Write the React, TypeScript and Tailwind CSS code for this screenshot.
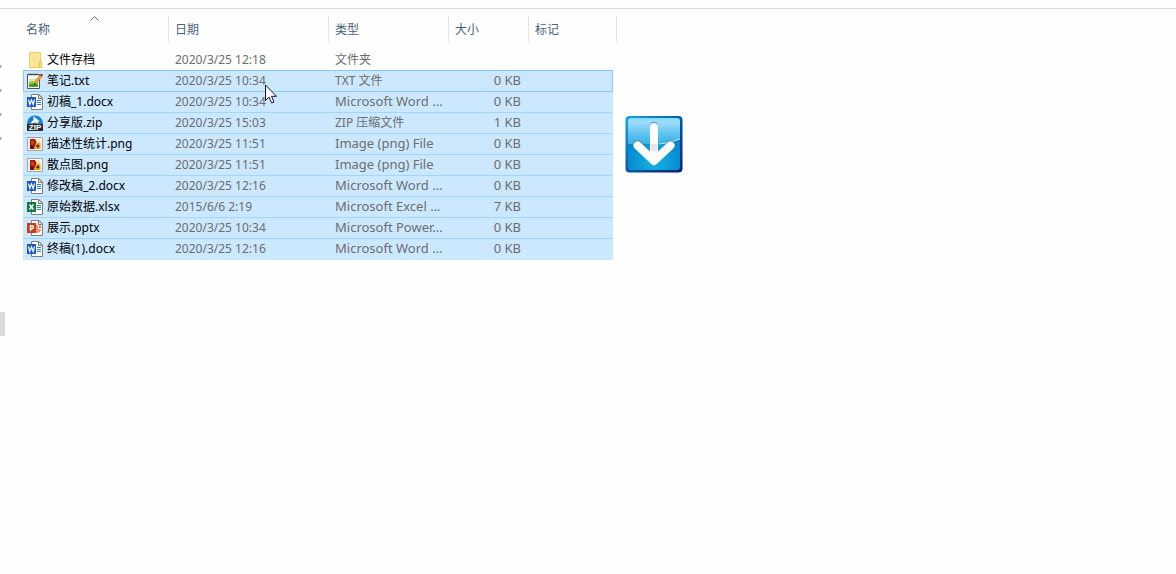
import type { ReactNode } from "react";

type Kind = "folder" | "text" | "word" | "zip" | "image" | "excel" | "slides";

interface Entry {
  name: string;
  date: string;
  type: string;
  size: string;
  kind: Kind;
}

const entries: Entry[] = [
  { name: "文件存档", date: "2020/3/25 12:18", type: "文件夹", size: "", kind: "folder" },
  { name: "笔记.txt", date: "2020/3/25 10:34", type: "TXT 文件", size: "0 KB", kind: "text" },
  { name: "初稿_1.docx", date: "2020/3/25 10:34", type: "Microsoft Word ...", size: "0 KB", kind: "word" },
  { name: "分享版.zip", date: "2020/3/25 15:03", type: "ZIP 压缩文件", size: "1 KB", kind: "zip" },
  { name: "描述性统计.png", date: "2020/3/25 11:51", type: "Image (png) File", size: "0 KB", kind: "image" },
  { name: "散点图.png", date: "2020/3/25 11:51", type: "Image (png) File", size: "0 KB", kind: "image" },
  { name: "修改稿_2.docx", date: "2020/3/25 12:16", type: "Microsoft Word ...", size: "0 KB", kind: "word" },
  { name: "原始数据.xlsx", date: "2015/6/6 2:19", type: "Microsoft Excel ...", size: "7 KB", kind: "excel" },
  { name: "展示.pptx", date: "2020/3/25 10:34", type: "Microsoft Power...", size: "0 KB", kind: "slides" },
  { name: "终稿(1).docx", date: "2020/3/25 12:16", type: "Microsoft Word ...", size: "0 KB", kind: "word" },
];

const isLatin = (value: string) => /^[\x20-\x7e]+$/.test(value);

function OfficeIcon({ color, letter, children }: { color: string; letter: ReactNode; children: ReactNode }) {
  return (
    <>
      <path d="M4.5 .5H12L15.5 4V15.5H4.5z" fill="#fff" stroke="#7d7d7d" />
      <path d="M11.5 .5V4.5H15.5z" fill="#e8e8e8" stroke="#7d7d7d" />
      {children}
      <path d="M0 3H9V13H0z" fill={color} />
      {letter}
    </>
  );
}

function FileIcon({ kind }: { kind: Kind }) {
  let art: ReactNode = null;
  if (kind === "folder") {
    art = (
      <>
        <path d="M2.5 .5H13.5V10H14.5V15.5H2.5z" fill="#fde693" stroke="#ecce68" />
        <path d="M12.5 9.5H14.5V15.5H12.5z" fill="#fbe28a" stroke="#e6c254" />
      </>
    );
  } else if (kind === "text") {
    art = (
      <>
        <path d="M.5 1.5H12.5V15.5H.5z" fill="#fff" stroke="#555" />
        <path d="M2 6l9-1v5H2z" fill="#cfe8b0" />
        <path d="M2 9l3-1 3 1 3-2v7H2z" fill="#8dd03f" />
        <path d="M2 11.5l4-1 5 1V14H2z" fill="#3fa51d" />
        <path d="M1.5 1.5H11.5" stroke="#444" strokeWidth="2" strokeDasharray="1 1" />
        <path d="M7.3 11.5L8 8.5 13 2l2 1.4L9.8 10z" fill="#f6a51d" stroke="#9b5b12" strokeWidth=".5" />
        <path d="M13 2L14 .5l2 1.3L15 3.4z" fill="#a3262b" />
        <path d="M6.8 12.3l.6-2 1.4 1z" fill="#222" />
      </>
    );
  } else if (kind === "word") {
    art = (
      <OfficeIcon color="#185abd" letter={<path d="M1.5 5.5L2.8 10.5 4.5 6 6.2 10.5 7.5 5.5" fill="none" stroke="#fff" strokeWidth="1.2" />}>
        <path d="M10 6.5H14M10 8.5H14M10 10.5H14" stroke="#2b7cd3" />
      </OfficeIcon>
    );
  } else if (kind === "excel") {
    art = (
      <OfficeIcon color="#107c41" letter={<path d="M2.5 5.5L6.5 10.5M6.5 5.5L2.5 10.5" stroke="#fff" strokeWidth="1.6" />}>
        <path d="M10 6.5H14M10 8.5H14M10 10.5H14" stroke="#21a366" />
      </OfficeIcon>
    );
  } else if (kind === "slides") {
    art = (
      <OfficeIcon color="#c43e1c" letter={<path d="M3.5 11V5.7H5a1.5 1.5 0 010 3H3.5" fill="none" stroke="#fff" strokeWidth="1.4" />}>
        <path d="M9 5V12.5a3.5 3.5 0 005-3.5H11V5z" fill="#ff8f6b" />
        <path d="M12 5V8H14.5A3 3 0 0012 5z" fill="#ed6c47" />
      </OfficeIcon>
    );
  } else if (kind === "zip") {
    art = (
      <>
        <path d="M0 8.5a8 8 0 0116 0z" fill="#0f80d8" />
        <path d="M6.5 1.2L13 6.5 10.5 6.3 12 8.5H9.5L8 7 6 8.5H3L6.5 5z" fill="#fff" />
        <path d="M0 8.5H16V16H0z" fill="#292d32" />
        <text x="8" y="15" textAnchor="middle" fill="#fff" fontFamily="Liberation Sans, sans-serif" fontSize="8" fontWeight="700">
          ZIP
        </text>
      </>
    );
  } else {
    art = (
      <>
        <path d="M.5 1.5H15.5V14.5H.5z" fill="#fafafa" stroke="#a2a2a2" />
        <path d="M2.5 3.5H13.5V12.5H2.5z" fill="#eee1b4" />
        <path d="M3 3H8l1.5 3-1 4-3 3H3z" fill="#a71912" />
        <path d="M4 4.5l3 .5 1 2-2 2-2-1z" fill="#d93515" />
        <path d="M3 9l3 1 2 3H3z" fill="#641313" />
        <path d="M8.5 8.5l2.5-2 2.5 1V13H7.5z" fill="#eea410" />
        <circle cx="10.8" cy="10" r="1.5" fill="#4d260d" />
        <path d="M7 5H9V8H7z" fill="#76310f" />
      </>
    );
  }
  return (
    <svg className="size-4 shrink-0" viewBox="0 0 16 16" aria-hidden="true">
      {art}
    </svg>
  );
}

function DownloadBadge() {
  return (
    <svg className="size-[58px]" viewBox="0 0 58 58" aria-hidden="true">
      <defs>
        <linearGradient id="edge" x1="0" y1="0" x2="1" y2="1">
          <stop offset="0" stopColor="#12a5e8" />
          <stop offset=".5" stopColor="#0759a8" />
          <stop offset="1" stopColor="#031f70" />
        </linearGradient>
        <linearGradient id="gloss" x1="0" y1="0" x2="0" y2="1">
          <stop offset="0" stopColor="#7fdcfc" />
          <stop offset=".15" stopColor="#a0dcfa" />
          <stop offset=".6" stopColor="#62c4f0" />
          <stop offset="1" stopColor="#35b0e6" />
        </linearGradient>
        <radialGradient id="base" cx=".5" cy=".85" r=".6">
          <stop offset="0" stopColor="#16b2e4" />
          <stop offset="1" stopColor="#0484cb" />
        </radialGradient>
      </defs>
      <rect x=".5" y="1" width="57" height="56.5" rx="4" fill="url(#edge)" />
      <rect x="3" y="3" width="52" height="52" rx="3" fill="url(#base)" />
      <path d="M3 6a3 3 0 013-3H52a3 3 0 013 3V24Q42 29 30 29H3z" fill="url(#gloss)" />
      <path d="M34 29Q44 28.5 55 24" fill="none" stroke="#c4ebfa" />
      <path d="M29 11V40M12.5 29.5L29 45 45.5 29.5" fill="none" stroke="#5c8fa8" strokeWidth="8" strokeLinecap="round" strokeLinejoin="round" />
      <path d="M29 12V40M12.5 30.5L29 46 45.5 30.5" fill="none" stroke="#fff" strokeWidth="8" strokeLinecap="round" strokeLinejoin="round" />
      <path d="M26 29H32V35L29 37 26 35z" fill="#e5e7e9" />
    </svg>
  );
}

const columns = [
  { label: "名称", pad: "pl-[3px]" },
  { label: "日期", pad: "pl-[6px]" },
  { label: "类型", pad: "pl-[6px]" },
  { label: "大小", pad: "pl-[6px]" },
  { label: "标记", pad: "pl-[6px]" },
];

export default function App() {
  return (
    <div className="flex min-h-screen flex-col bg-[#fefefe] pt-2 font-['Noto_Sans','Noto_Sans_CJK_SC',sans-serif] text-[12px] leading-[16px]">
      <div className="border-t border-[#d9d9d9]" />
      <div className="flex flex-1">
        <aside className="flex w-[23px] shrink-0 flex-col pt-[45px]">
          {[0, 1, 2, 3].map((n) => (
            <div key={n} className="flex h-6 items-center">
              <svg className="h-[5px] w-[3px]" viewBox="0 0 3 5" aria-hidden="true">
                <path d="M0 .5L2 2.5 0 4.5z" fill="#a0a8a8" />
              </svg>
            </div>
          ))}
          <div className="mt-[162px] h-6 w-[5px] bg-[#d9d9d9]" />
        </aside>

        <main className="relative flex items-start pt-[7px]">
          <table className="w-[594px] table-fixed border-separate border-spacing-0 whitespace-nowrap text-left">
            <colgroup>
              <col className="w-[146px]" />
              <col className="w-[160px]" />
              <col className="w-[120px]" />
              <col className="w-[80px]" />
              <col className="w-[84px]" />
              <col className="w-[4px]" />
            </colgroup>
            <thead>
              <tr>
                {columns.map((c, i) => (
                  <th key={c.label} colSpan={i === 4 ? 2 : 1} className="p-0 pb-[6px] font-normal">
                    <button
                      type="button"
                      className={`relative flex h-[27px] w-full items-center border-r border-[#e5e5e5] text-[#4c607a] ${c.pad}`}
                    >
                      {c.label}
                      {i === 0 && (
                        <svg className="absolute top-0 left-[67px] h-[5px] w-[9px]" viewBox="0 0 9 5" aria-hidden="true">
                          <path d="M.5 4.5L4.5 .5 8.5 4.5" fill="none" stroke="#6b6b6b" />
                        </svg>
                      )}
                    </button>
                  </th>
                ))}
              </tr>
            </thead>
            <tbody>
              {entries.map((e, i) => {
                const row =
                  i === 0
                    ? "border-transparent"
                    : i < 3
                      ? "bg-[#cce8ff] border-[#8ac8fb]"
                      : "bg-[#cce8ff] border-[#a3d6ff]";
                const cell = `h-[21px] border-t p-0 ${row} ${i === entries.length - 1 ? "pb-px" : ""}`;
                return (
                  <tr key={e.name} aria-selected={i > 0}>
                    <td className={`${cell} ${i === 1 ? "border-l pl-[3px]" : "pl-[4px]"}`}>
                      <div className="flex h-5 items-center gap-1 text-black">
                        <FileIcon kind={e.kind} />
                        {e.name}
                      </div>
                    </td>
                    <td className={`${cell} text-[#6d6d6d]`}>
                      <div className="pl-[6px]">{e.date}</div>
                    </td>
                    <td className={`${cell} text-[#6d6d6d]`}>
                      <div className={`pl-[6px] ${isLatin(e.type) ? "pb-0.5 text-[13px]" : ""}`}>{e.type}</div>
                    </td>
                    <td className={`${cell} text-right text-[#6d6d6d]`}>
                      <div className="pr-[8px] pb-0.5 text-[13px]">{e.size}</div>
                    </td>
                    <td className={`${cell} ${i === 1 ? "border-r" : ""}`} />
                    <td className="p-0" />
                  </tr>
                );
              })}
            </tbody>
          </table>

          <div className="mt-[99px] ml-2 shrink-0">
            <DownloadBadge />
          </div>

          <svg className="pointer-events-none absolute top-[75px] left-[242px] h-[20px] w-[13px]" viewBox="0 0 13 20" aria-hidden="true">
            <path d="M.5 1V16.5L4.1 13.1 6.6 19 9 18 6.5 12.3H11.5z" fill="#fff" stroke="#15152b" />
          </svg>
        </main>
      </div>
    </div>
  );
}
